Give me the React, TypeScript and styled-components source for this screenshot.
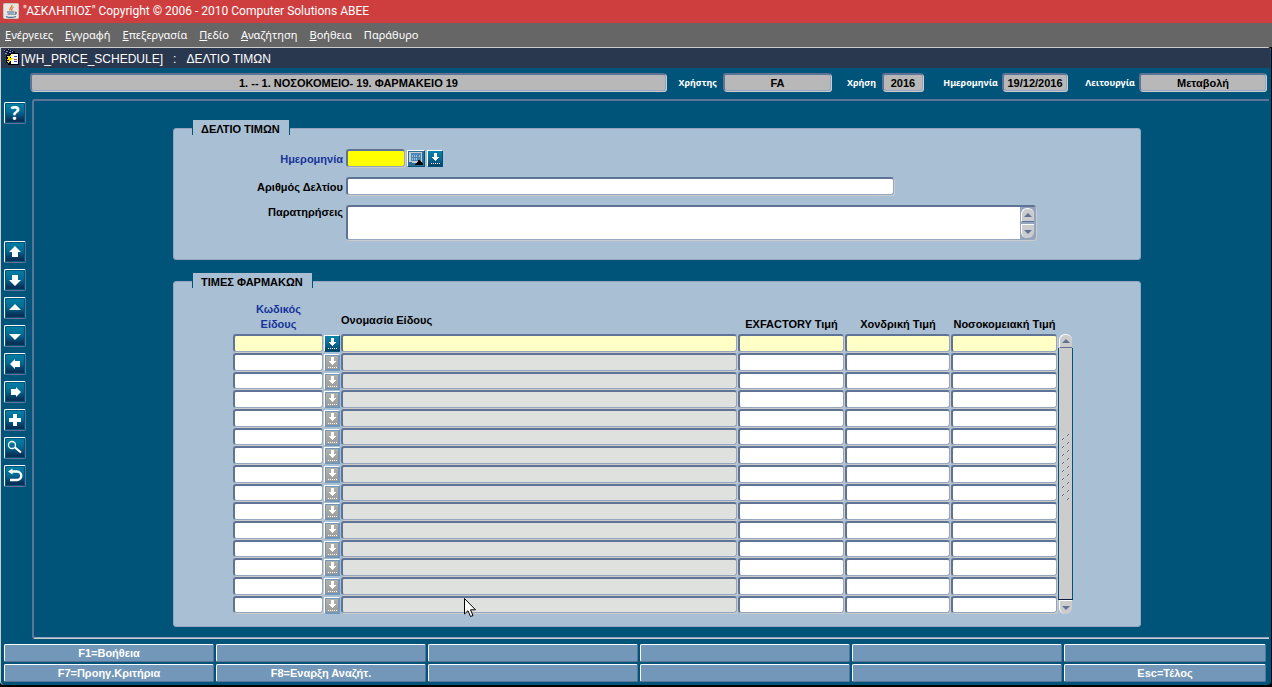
import React from "react";
import styled, { createGlobalStyle, css } from "styled-components";

const color = {
  sea: "#00547a",
  panel: "#a9bfd3",
  edge: "#5f7396",
  edgeSoft: "#95a5bf",
  light: "#cccccc",
  bar: "#7397b8",
};

const arial = `"Liberation Sans", Arial, sans-serif`;
const humanist = `"Noto Sans", "Segoe UI", sans-serif`;

const GlobalStyle = createGlobalStyle`
  * { box-sizing: border-box; }
  body { margin: 0; background: #000; font-family: ${arial}; font-size: 11px; }
  button, input, textarea { font: inherit; margin: 0; padding: 0; border-radius: 0; }
  button, input, textarea { outline: none; }
`;

const Page = styled.div`
  display: flex;
  flex-direction: column;
  min-height: 100vh;
`;

const TitleBar = styled.header`
  display: flex;
  align-items: center;
  gap: 3px;
  height: 23px;
  padding-left: 3px;
  background: #cf3e3e;
  color: #fff;
  font: 12px/23px Roboto, "Segoe UI", sans-serif;
  white-space: pre;
`;

const MenuBar = styled.nav`
  display: flex;
  align-items: center;
  gap: 12px;
  height: 24px;
  padding-left: 5px;
  background: #666;
`;

const MenuItem = styled.button`
  border: 0;
  background: none;
  color: #fff;
  font: 11px/22px ${humanist};
  white-space: nowrap;
`;

const Window = styled.main`
  flex: 1;
  display: flex;
  flex-direction: column;
  margin: 0 1px 2px 0;
  border-top: 1px solid ${color.light};
  border-left: 1px solid ${color.light};
  border-radius: 0 4px 4px 4px;
  background: ${color.sea};
`;

const WindowTitle = styled.h1`
  display: flex;
  gap: 10px;
  height: 20px;
  margin: 0 1px 0 0;
  padding-left: 2px;
  background: #2a384f;
  color: #fff;
  font: 12px/22px ${arial};
  white-space: nowrap;
`;

const WindowName = styled.span`
  display: flex;
  gap: 1px;
`;

const field = css`
  border: 1px solid ${color.edgeSoft};
  border-top: 2px solid ${color.edge};
  border-left: 2px solid ${color.edge};
  border-radius: 3px;
  box-shadow: 1px 1px 0 ${color.light};
`;

const StatusRow = styled.div`
  display: flex;
  align-items: flex-start;
  height: 31px;
  padding: 5px 5px 0 29px;
`;

const StatusLabel = styled.label<{ $width: number; $gap: number }>`
  flex: none;
  width: ${(p) => p.$width}px;
  padding-right: ${(p) => p.$gap}px;
  color: #fff;
  font: bold 9px/19px ${humanist};
  text-align: right;
`;

const StatusField = styled.input<{ $width?: number }>`
  ${field}
  flex: ${(p) => (p.$width ? "none" : "1")};
  width: ${(p) => (p.$width ? `${p.$width}px` : "auto")};
  min-width: 0;
  height: 18px;
  background: #b8b8b8;
  color: #000;
  font: bold 11px/15px ${arial};
  text-align: center;
`;

const Workspace = styled.div`
  flex: 1;
  display: flex;
  margin-right: 2px;
`;

const ToolColumn = styled.div`
  display: flex;
  flex-direction: column;
  gap: 6px;
  width: 31px;
  padding: 3px 0 0 3px;
`;

const ToolButton = styled.button<{ $gapAfter?: number }>`
  display: block;
  width: 22px;
  height: 22px;
  margin-bottom: ${(p) => p.$gapAfter ?? 0}px;
  border: 1px solid ${color.edge};
  border-top-color: #fff;
  border-left-color: #fff;
  border-radius: 2px;
  background: linear-gradient(#0080a6 0%, #006a93 45%, #073158 85%, #073158 100%);
  box-shadow: inset 0 0 0 1px ${color.sea};
  color: #fff;
  font: bold 19px/20px ${humanist};

  svg { display: block; }
`;

const Canvas = styled.div`
  flex: 1;
  display: flex;
  flex-direction: column;
  gap: 21px;
  padding: 27px 128px 10px 139px;
  border-top: 2px solid ${color.edge};
  border-left: 2px solid ${color.edge};
  border-bottom: 1px solid ${color.light};
  border-radius: 3px 0 0 3px;
  box-shadow: inset 0 -1px 0 ${color.edgeSoft};
`;

const Panel = styled.section<{ $bottom: number }>`
  padding-bottom: ${(p) => p.$bottom}px;
  border: 1px solid ${color.edgeSoft};
  border-radius: 3px;
  background: ${color.panel};
`;

const PanelTab = styled.h2`
  width: max-content;
  height: 15px;
  margin: -9px 0 0 18px;
  padding: 0 9px 0 8px;
  border: 1px solid ${color.sea};
  border-width: 0 1px;
  background: ${color.panel};
  color: #000;
  font: bold 11px/18px ${arial};
`;

const Form = styled.div`
  display: grid;
  grid-template-columns: 169px 1fr;
  gap: 10px 3px;
  padding-top: 14px;
`;

const FormLabel = styled.label<{ $key?: boolean; $tall?: boolean }>`
  height: 18px;
  color: ${(p) => (p.$key ? "#16349a" : "#000")};
  font: bold 11px ${arial};
  line-height: ${(p) => (p.$tall ? 14 : 20)}px;
  text-align: right;
  white-space: nowrap;
`;

const FormLine = styled.div`
  display: flex;
  align-items: center;
  gap: 2px;
`;

const TextBox = styled.input<{ $width: number; $fill: string }>`
  ${field}
  width: ${(p) => p.$width}px;
  height: 18px;
  background: ${(p) => p.$fill};
`;

const NotesBox = styled.div`
  ${field}
  display: flex;
  width: 690px;
  height: 35px;
  background: #fff;
`;

const Notes = styled.textarea`
  flex: 1;
  border: 0;
  resize: none;
  background: transparent;
`;

const NotesScroll = styled.div`
  display: flex;
  flex-direction: column;
  justify-content: space-between;
  align-items: center;
  width: 15px;
  padding: 1px 0;
  background: ${color.edgeSoft};
`;

const ScrollButton = styled.button<{ $down?: boolean }>`
  display: block;
  width: 13px;
  height: 14px;
  border: 0 solid ${color.edge};
  border-top: 1px solid #fff;
  border-left: 1px solid #fff;
  border-bottom-width: ${(p) => (p.$down ? 0 : 1)}px;
  border-radius: ${(p) => (p.$down ? "0 0 6px 6px" : "6px 6px 0 0")};
  background: ${color.light};

  svg { display: block; margin: auto; }
`;

const PickButton = styled.button<{ $wide?: boolean }>`
  display: block;
  width: ${(p) => (p.$wide ? 18 : 16)}px;
  height: 17px;
  border: 1px solid ${color.sea};
  border-top-color: #fff;
  border-left-color: #fff;
  background: linear-gradient(#0b82a8, #0a6c97 50%, #063e66);

  svg { display: block; }

  &:disabled {
    border: 1px solid ${color.bar};
    border-top-color: #fff;
    border-left-color: #fff;
    background: linear-gradient(#b2b2ae, #9a9c9a);
    box-shadow: inset 0 0 0 1px ${color.bar};
  }
`;

const GridArea = styled.div`
  display: flex;
  align-items: flex-end;
  padding: 0 67px 0 59px;
`;

const PriceTable = styled.table`
  flex: 1;
  width: 0;
  table-layout: fixed;
  border-collapse: collapse;

  td { padding: 0; vertical-align: top; }
`;

const Column = styled.col<{ $width?: number }>`
  width: ${(p) => (p.$width ? `${p.$width}px` : "auto")};
`;

const HeadCell = styled.th<{ $key?: boolean; $left?: boolean }>`
  height: 46px;
  padding: 0 0 ${(p) => (p.$left ? 6 : 2)}px;
  color: ${(p) => (p.$key ? "#16349a" : "#000")};
  font: bold 11px/15px ${arial};
  text-align: ${(p) => (p.$left ? "left" : "center")};
  vertical-align: bottom;
  white-space: nowrap;
`;

const BodyRow = styled.tr`
  height: 19px;

  button { margin-top: 1px; }
  &:nth-child(3n) { height: 18px; }
  &:nth-child(3n) input { height: 17px; }
`;

const CellInput = styled.input<{ $fill: string }>`
  ${field}
  display: block;
  width: calc(100% - 1px);
  height: 18px;
  background: ${(p) => p.$fill};
`;

const GridScroll = styled.div`
  display: flex;
  flex-direction: column;
  align-items: center;
  width: 15px;
  height: 280px;
`;

const Track = styled.div`
  flex: 1;
  display: flex;
  align-items: center;
  justify-content: center;
  width: 15px;
  padding-bottom: 12px;
  border: 1px solid ${color.sea};
  border-top: 0;
  border-bottom-color: #0c1c44;
  background: ${color.light};
`;

const KeyBar = styled.footer`
  display: grid;
  grid-template-columns: repeat(5, 210fr) 202fr;
  gap: 2px;
  padding: 5px 5px 3px 3px;
`;

const KeyButton = styled.button`
  height: 18px;
  border: 1px solid ${color.edge};
  border-top-color: #fff;
  border-left-color: #fff;
  border-radius: 2px;
  background: ${color.bar};
  color: #fff;
  font: bold 11px/16px ${arial};
`;

const Pointer = styled.svg`
  position: absolute;
  left: 464px;
  top: 598px;
  pointer-events: none;
`;

const JavaIcon = () => (
  <svg width="17" height="17" viewBox="0 0 17 17" aria-hidden="true">
    <rect x="0.5" y="0.5" width="15" height="15" rx="1" fill="#e9e6e2" stroke="#c9c4c0" />
    <path d="M9 2C9.500 4 6 5 7 7.500M10.500 4C8.500 5.500 8.500 6 9 8" fill="none" stroke="#e0732c" strokeWidth="1.300" />
    <path d="M4 9H11.500M4.500 11H11M12 9c2 0 1.500 2-.5 2.300M3 13.500c3 1.200 7 1 10 0" fill="none" stroke="#43698c" strokeWidth="1.200" />
  </svg>
);

const FormIcon = () => (
  <svg width="17" height="19" viewBox="0 0 17 19" shapeRendering="crispEdges" aria-hidden="true">
    <path d="M1 2h3V1h3v1h3v1h2v3H9V5H6v1H3V4H1z" fill="#0a1030" />
    <path d="M1 2h1v1H1zM3 3h2v1H3zM5 1h1v1H5zM7 2h1v1H7zM6 4h2v1H6zM9 3h1v1H9zM10 5h2v1h-2zM2 5h2v1H2z" fill="#8d9ac4" />
    <path d="M3 7h5v10H5v-2H3z" fill="#000" />
    <path d="M4 8h2v1H4zM4 13h2v1H4z" fill="#c8c8c8" />
    <rect x="6" y="5" width="10" height="12" fill="#000" />
    <rect x="8" y="6" width="7" height="10" fill="#fff" />
    <path d="M11 11h3v1h-3z" fill="#d33" />
    <path d="M11 8h3v1h-3zM11 13h3v1h-3z" fill="#2a4ad0" />
    <path d="M7 7h2L7 10h3L5 16l1-4H4z" fill="#ffe600" />
  </svg>
);

const toolShapes: Record<string, React.ReactNode> = {
  up: <path d="M10 4L16 10H13V15H7V10H4Z" />,
  down: <path d="M10 16L4 10H7V5H13V10H16Z" />,
  pageUp: <path d="M10 6L16 12H4Z" />,
  pageDown: <path d="M10 14L4 8H16Z" />,
  left: <path d="M5 10L10 5V7H15V13H10V15Z" />,
  right: <path d="M16 10L11 5V7H6V13H11V15Z" />,
  insert: <path d="M8 4h4v4h4v4h-4v4H8v-4H4V8h4z" />,
  find: (
    <g fill="none" stroke="#fff">
      <circle cx="7" cy="7" r="3.500" strokeWidth="1.300" />
      <path d="M10 9.500L16 14.500" strokeWidth="2.200" />
    </g>
  ),
  undo: (
    <>
      <path d="M6 5.500H12a4 4 0 0 1 0 8.500H5" fill="none" stroke="#fff" strokeWidth="2.400" />
      <path d="M3 5.500L7.500 2.500V8.500Z" />
    </>
  ),
};

const ToolIcon = ({ name }: { name: string }) => (
  <svg width="20" height="20" viewBox="0 0 20 20" fill="#fff" aria-hidden="true">
    {toolShapes[name]}
  </svg>
);

const PickIcon = () => (
  <svg width="14" height="15" viewBox="0 0 14 15" fill="#fff" shapeRendering="crispEdges" aria-hidden="true">
    <path d="M6 2h3v4h2v1h-1v1H9v1H8v1H7V9H6V8H5V7H4V6h2z" />
    <path d="M3 12h1v1H3zM5 12h1v1H5zM7 12h1v1H7zM9 12h1v1H9zM11 12h1v1h-1z" />
  </svg>
);

const CalendarIcon = () => (
  <svg width="16" height="15" viewBox="0 0 16 15" shapeRendering="crispEdges" aria-hidden="true">
    <rect width="16" height="15" fill="#2b6f96" />
    <path d="M1 1h13v11H1z" fill="#c6ccd2" />
    <rect x="3" y="2" width="10" height="8" fill="#4a86b6" />
    <path d="M4 4h1v2H4zM6 4h1v2H6zM8 4h1v2H8zM11 4h1v2h-1zM4 7h1v2H4zM6 7h1v2H6zM8 7h1v2H8z" fill="#9fbdd6" />
    <path d="M1 11h3v1h3v1H1z" fill="#2b6f96" />
    <path d="M10 9h2v1h1v1h1v1h1v2H7v-1h1v-1h1v-1h1z" fill="#000" />
  </svg>
);

const Triangle = ({ down }: { down?: boolean }) => (
  <svg width="8" height="4" viewBox="0 0 8 4" fill={color.edge} aria-hidden="true">
    <path d={down ? "M0 0H8L4 4Z" : "M0 4H8L4 0Z"} />
  </svg>
);

const Grip = () => (
  <svg width="9" height="68" viewBox="0 0 9 68" stroke={color.edge} aria-hidden="true">
    {Array.from({ length: 8 }, (_, i) => (
      <path key={i} d={`M1 ${i * 8 + 6}l2 -2M6 ${i * 8 + 2}l2 -2M6 ${i * 8 + 10}l2 -2`} />
    ))}
  </svg>
);

const menus = [
  ["Ε", "νέργειες"],
  ["Ε", "γγραφή"],
  ["Ε", "πεξεργασία"],
  ["Π", "εδίο"],
  ["Α", "ναζήτηση"],
  ["Β", "οήθεια"],
  ["", "Παράθυρο"],
];

const tools = [
  ["up", "Προηγούμενη εγγραφή"],
  ["down", "Επόμενη εγγραφή"],
  ["pageUp", "Προηγούμενη σελίδα"],
  ["pageDown", "Επόμενη σελίδα"],
  ["left", "Προηγούμενο μπλοκ"],
  ["right", "Επόμενο μπλοκ"],
  ["insert", "Νέα εγγραφή"],
  ["find", "Αναζήτηση"],
  ["undo", "Αναίρεση"],
];

const status = [
  { id: "user", label: "Χρήστης", labelWidth: 57, gap: 6, value: "FA", width: 108 },
  { id: "year", label: "Χρήση", labelWidth: 51, gap: 6, value: "2016", width: 41 },
  { id: "today", label: "Ημερομηνία", labelWidth: 79, gap: 4, value: "19/12/2016", width: 65 },
  { id: "mode", label: "Λειτουργία", labelWidth: 72, gap: 4, value: "Μεταβολή", width: 127 },
];

const keys = [
  "F1=Βοήθεια", "", "", "", "", "",
  "F7=Προηγ.Κριτήρια", "F8=Εναρξη Αναζήτ.", "", "", "", "Esc=Τέλος",
];

const priceRows = Array.from({ length: 15 }, (_, i) => i);

export default function App() {
  return (
    <Page>
      <GlobalStyle />
      <TitleBar>
        <JavaIcon />
        <span>"ΑΣΚΛΗΠΙΟΣ" Copyright © 2006 - 2010 Computer Solutions ΑΒΕΕ</span>
      </TitleBar>
      <MenuBar>
        {menus.map(([key, rest]) => (
          <MenuItem key={key + rest} type="button">
            {key && <u>{key}</u>}
            {rest}
          </MenuItem>
        ))}
      </MenuBar>

      <Window>
        <WindowTitle>
          <WindowName>
            <FormIcon />
            [WH_PRICE_SCHEDULE]
          </WindowName>
          <span>:</span>
          <span>ΔΕΛΤΙΟ ΤΙΜΩΝ</span>
        </WindowTitle>

        <StatusRow>
          <StatusField readOnly aria-label="Μονάδα" defaultValue="1. -- 1. ΝΟΣΟΚΟΜΕΙΟ- 19. ΦΑΡΜΑΚΕΙΟ 19" />
          {status.map((s) => (
            <React.Fragment key={s.id}>
              <StatusLabel htmlFor={s.id} $width={s.labelWidth} $gap={s.gap}>{s.label}</StatusLabel>
              <StatusField id={s.id} readOnly defaultValue={s.value} $width={s.width} />
            </React.Fragment>
          ))}
        </StatusRow>

        <Workspace>
          <ToolColumn>
            <ToolButton type="button" $gapAfter={111} aria-label="Βοήθεια">?</ToolButton>
            {tools.map(([name, label]) => (
              <ToolButton key={name} type="button" aria-label={label}>
                <ToolIcon name={name} />
              </ToolButton>
            ))}
          </ToolColumn>

          <Canvas>
            <Panel $bottom={19}>
              <PanelTab>ΔΕΛΤΙΟ ΤΙΜΩΝ</PanelTab>
              <Form>
                <FormLabel htmlFor="date" $key>Ημερομηνία</FormLabel>
                <FormLine>
                  <TextBox id="date" $width={59} $fill="#ffff00" />
                  <PickButton type="button" $wide aria-label="Ημερολόγιο"><CalendarIcon /></PickButton>
                  <PickButton type="button" aria-label="Λίστα τιμών"><PickIcon /></PickButton>
                </FormLine>
                <FormLabel htmlFor="number">Αριθμός Δελτίου</FormLabel>
                <FormLine>
                  <TextBox id="number" $width={548} $fill="#fff" />
                </FormLine>
                <FormLabel htmlFor="notes" $tall>Παρατηρήσεις</FormLabel>
                <NotesBox>
                  <Notes id="notes" />
                  <NotesScroll>
                    <ScrollButton type="button" aria-label="Πάνω"><Triangle /></ScrollButton>
                    <ScrollButton type="button" $down aria-label="Κάτω"><Triangle down /></ScrollButton>
                  </NotesScroll>
                </NotesBox>
              </Form>
            </Panel>

            <Panel $bottom={12}>
              <PanelTab>ΤΙΜΕΣ ΦΑΡΜΑΚΩΝ</PanelTab>
              <GridArea>
                <PriceTable>
                  <colgroup>
                    <Column $width={91} />
                    <Column $width={17} />
                    <Column />
                    <Column $width={107} />
                    <Column $width={106} />
                    <Column $width={107} />
                  </colgroup>
                  <thead>
                    <tr>
                      <HeadCell scope="col" $key>Κωδικός<br />Είδους</HeadCell>
                      <td />
                      <HeadCell scope="col" $left>Ονομασία Είδους</HeadCell>
                      <HeadCell scope="col">EXFACTORY Τιμή</HeadCell>
                      <HeadCell scope="col">Χονδρική Τιμή</HeadCell>
                      <HeadCell scope="col">Νοσοκομειακή Τιμή</HeadCell>
                    </tr>
                  </thead>
                  <tbody>
                    {priceRows.map((i) => {
                      const current = i === 0;
                      const fill = current ? "#ffffc6" : "#fff";
                      return (
                        <BodyRow key={i}>
                          <td><CellInput $fill={fill} aria-label="Κωδικός Είδους" /></td>
                          <td>
                            <PickButton type="button" disabled={!current} aria-label="Λίστα ειδών">
                              <PickIcon />
                            </PickButton>
                          </td>
                          <td>
                            <CellInput $fill={current ? fill : "#dee1de"} readOnly aria-label="Ονομασία Είδους" />
                          </td>
                          <td><CellInput $fill={fill} aria-label="EXFACTORY Τιμή" /></td>
                          <td><CellInput $fill={fill} aria-label="Χονδρική Τιμή" /></td>
                          <td><CellInput $fill={fill} aria-label="Νοσοκομειακή Τιμή" /></td>
                        </BodyRow>
                      );
                    })}
                  </tbody>
                </PriceTable>
                <GridScroll>
                  <ScrollButton type="button" aria-label="Πάνω"><Triangle /></ScrollButton>
                  <Track><Grip /></Track>
                  <ScrollButton type="button" $down aria-label="Κάτω"><Triangle down /></ScrollButton>
                </GridScroll>
              </GridArea>
            </Panel>
          </Canvas>
        </Workspace>

        <KeyBar>
          {keys.map((label, i) => (
            <KeyButton key={i} type="button" aria-label={label || `Πλήκτρο ${i + 1}`}>{label}</KeyButton>
          ))}
        </KeyBar>
      </Window>

      <Pointer width="13" height="20" viewBox="0 0 13 20" aria-hidden="true">
        <path d="M0.500 0.500V16L4 12.700L6.500 18.500L9 17.500L6.500 11.800H11.500Z" fill="#fff" stroke="#000" />
      </Pointer>
    </Page>
  );
}
